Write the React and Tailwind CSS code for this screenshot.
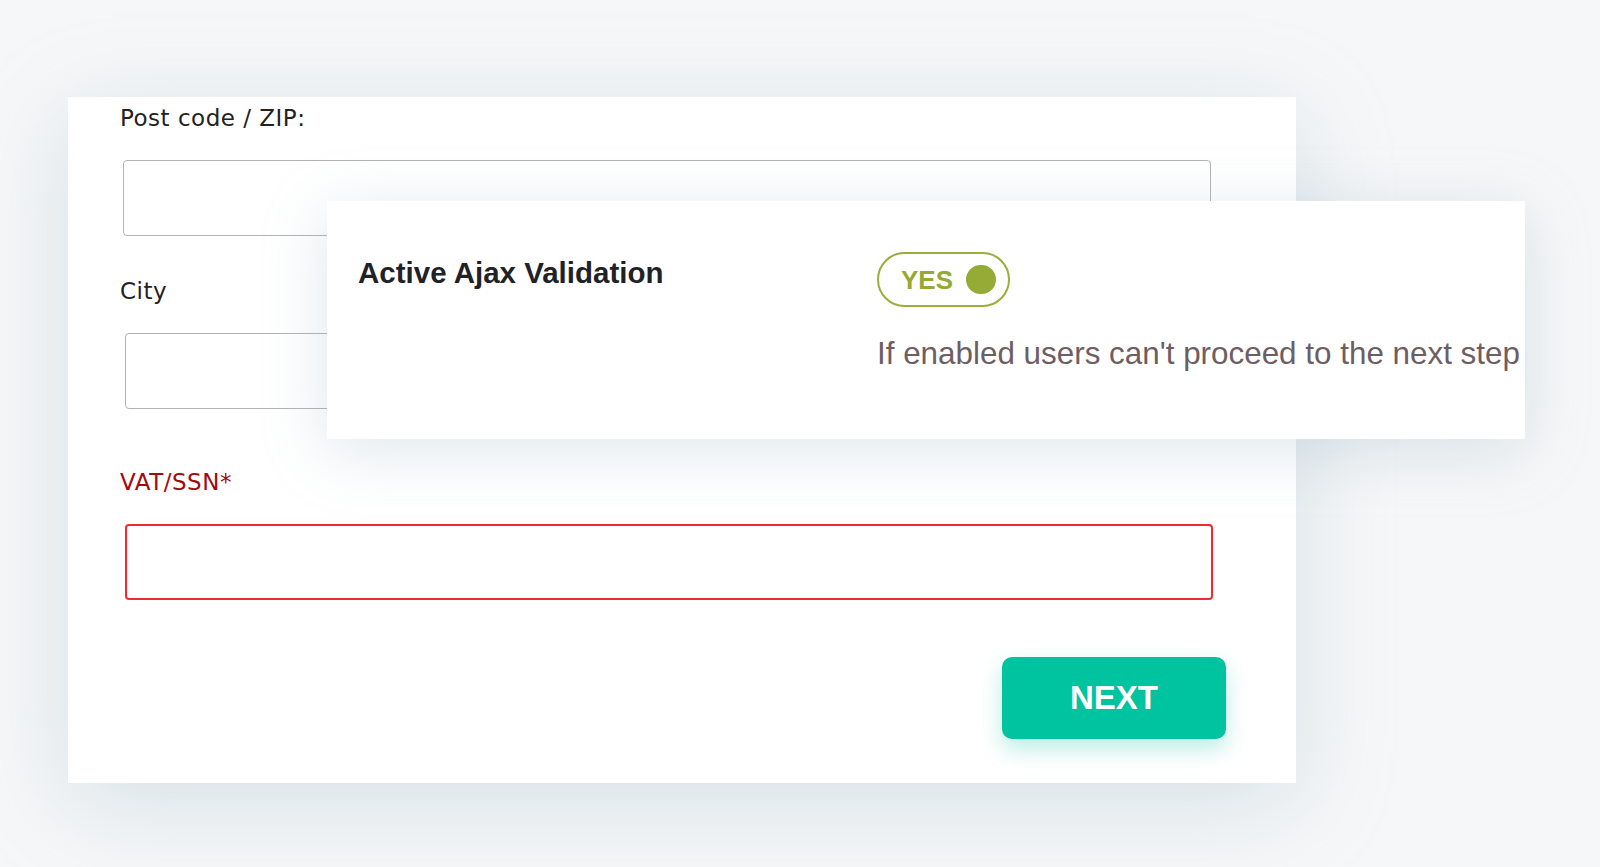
import React from 'react';

const labelFont = { fontFamily: '"DejaVu Sans", "Noto Sans", sans-serif' };
const uiFont = { fontFamily: '"Liberation Sans", Arial, sans-serif' };

function Field({ label, required, className = '', inputClass = 'ml-[4px]' }) {
  return (
    <div className={className}>
      <label
        style={labelFont}
        className={`block text-[23px] leading-[28px] tracking-[0.5px] ${required ? 'text-[#a00c0e]' : 'text-[#222222]'}`}
      >
        {label}
      </label>
      <input
        type="text"
        className={`mt-[28px] block h-[76px] w-[1088px] rounded-[4px] bg-white outline-none ${inputClass} ${
          required ? 'border-2 border-[#ef2b31]' : 'border-[1.5px] border-[#b3b3b3]'
        }`}
      />
    </div>
  );
}

function AjaxToggle() {
  return (
    <div
      style={uiFont}
      className="flex h-[55px] w-[133px] items-center rounded-full border-2 border-[#9aae3b] bg-white pl-[22px]"
    >
      <span className="text-[26px] font-bold leading-none text-[#95aa33]">YES</span>
      <span className="ml-[13px] h-[29px] w-[30px] rounded-full bg-[#96aa36]" />
    </div>
  );
}

export default function App() {
  return (
    <div className="relative h-[867px] w-full overflow-hidden bg-[#f6f7f8]">
      <div className="pl-[68px] pt-[97px]">
        <div className="w-[1228px] bg-white pl-[52px] pt-[7px] pb-[44px] shadow-[0_20px_90px_rgba(140,175,192,0.3)]">
          <Field label="Post code / ZIP:" inputClass="ml-[3px]" />
          <Field label="City" className="mt-[41px]" inputClass="ml-[5px]" />
          <Field label="VAT/SSN*" required className="mt-[59px]" inputClass="ml-[5px]" />
          <div className="mt-[57px] flex justify-end pr-[70px]">
            <button
              style={uiFont}
              className="h-[82px] w-[224px] rounded-[10px] bg-[#00c3a0] text-[33px] font-bold text-white shadow-[0_10px_22px_rgba(0,195,160,0.28)]"
            >
              NEXT
            </button>
          </div>
        </div>
      </div>

      <div className="absolute left-[327px] top-[201px] flex h-[238px] w-[1198px] bg-white pl-[31px] pt-[51px] shadow-[0_12px_60px_rgba(140,170,185,0.28)]">
        <h3
          style={uiFont}
          className="mt-[3px] w-[519px] text-[29.5px] font-bold leading-[35px] text-[#1f2328]"
        >
          Active Ajax Validation
        </h3>
        <div>
          <AjaxToggle />
          <p style={uiFont} className="mt-[29px] whitespace-nowrap text-[31.4px] leading-[36px] text-[#6d5e64]">
            If enabled users can't proceed to the next step
          </p>
        </div>
      </div>
    </div>
  );
}
